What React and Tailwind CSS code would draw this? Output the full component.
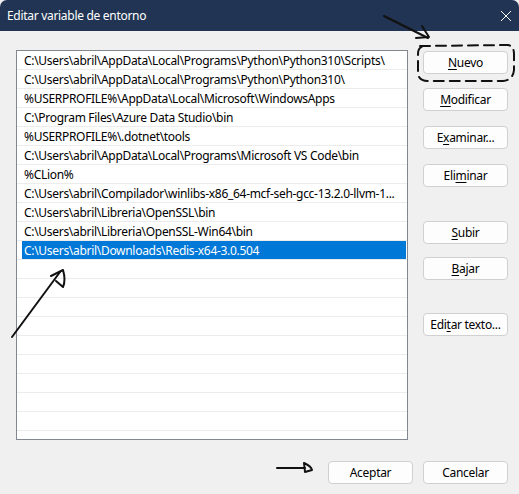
import React from "react"

const entries = [
  "C:\\Users\\abril\\AppData\\Local\\Programs\\Python\\Python310\\Scripts\\",
  "C:\\Users\\abril\\AppData\\Local\\Programs\\Python\\Python310\\",
  "%USERPROFILE%\\AppData\\Local\\Microsoft\\WindowsApps",
  "C:\\Program Files\\Azure Data Studio\\bin",
  "%USERPROFILE%\\.dotnet\\tools",
  "C:\\Users\\abril\\AppData\\Local\\Programs\\Microsoft VS Code\\bin",
  "%CLion%",
  "C:\\Users\\abril\\Compilador\\winlibs-x86_64-mcf-seh-gcc-13.2.0-llvm-1...",
  "C:\\Users\\abril\\Libreria\\OpenSSL\\bin",
  "C:\\Users\\abril\\Libreria\\OpenSSL-Win64\\bin",
  "C:\\Users\\abril\\Downloads\\Redis-x64-3.0.504",
]

const SELECTED = 10
const font = { fontFamily: "'Noto Sans', 'Open Sans', sans-serif" }

// label with one underlined mnemonic letter
const Btn = ({ before = "", key_ = "", after = "", className = "" }) => (
  <button
    className={`h-[23px] w-[85px] rounded-[4px] border border-[#d0d0d0] bg-[#fdfdfd] text-[12px] text-black leading-none ${className}`}
  >
    {before}
    {key_ && <span className="underline underline-offset-2">{key_}</span>}
    {after}
  </button>
)

const Annotations = () => (
  <svg className="pointer-events-none absolute inset-0" width="519" height="494" viewBox="0 0 519 494" fill="none">
    {/* arrow to Nuevo */}
    <path d="M384 16 L428 38" stroke="#111" strokeWidth="2" strokeLinecap="round" />
    <path d="M422 26 L429 37 L416 38" stroke="#111" strokeWidth="2" strokeLinecap="round" strokeLinejoin="round" />
    {/* dashed loop around Nuevo */}
    <path
      d="M420 46 L508 45 Q514 46 514 54 L514 70 Q513 80 503 81 L428 81 Q418 81 418 72 L418 54 Q418 46 426 46"
      stroke="#111"
      strokeWidth="2"
      strokeDasharray="10 6"
      strokeLinecap="round"
    />
    {/* arrow to selected row */}
    <path d="M12 337 L60 272" stroke="#111" strokeWidth="2" strokeLinecap="round" />
    <path d="M51 276 L63 270 Q66 280 63 287 L56 281" stroke="#111" strokeWidth="2" strokeLinecap="round" strokeLinejoin="round" />
    {/* arrow to Aceptar */}
    <path d="M277 468 L305 468" stroke="#111" strokeWidth="2" strokeLinecap="round" />
    <path d="M304 463 Q311 466 312 470 L305 472 Z" stroke="#111" strokeWidth="2" strokeLinejoin="round" />
  </svg>
)

export default function App() {
  const rows = Array.from({ length: 21 }, (_, i) => entries[i] ?? "")

  return (
    <div className="relative h-[494px] w-[519px] overflow-hidden bg-[#f0f0f0] tracking-[-0.3px]" style={font}>
      {/* title bar */}
      <div className="flex h-[31px] items-center justify-between rounded-t-[7px] bg-[#213453] pl-[7px] pr-[6px] text-[12px] text-white">
        <span>Editar variable de entorno</span>
        <svg width="12" height="12" viewBox="0 0 12 12" className="mr-[1px]">
          <path d="M1 1 L11 11 M11 1 L1 11" stroke="#fff" strokeWidth="1" />
        </svg>
      </div>

      <div className="flex">
        {/* list */}
        <div className="ml-[16px] mt-[19px] h-[390px] w-[392px] overflow-hidden border border-[#828790] bg-white">
          {rows.map((text, i) => (
            <div key={i} className="h-[19px] border-b border-[#ececec]">
              <div
                className={`ml-[5px] mr-[1px] h-[18px] whitespace-nowrap pl-[2px] text-[12px] leading-[19px] ${
                  i === SELECTED ? "bg-[#0078d7] text-white" : "text-black"
                }`}
              >
                {text}
              </div>
            </div>
          ))}
        </div>

        {/* side buttons */}
        <div className="ml-[15px] mt-[20px] flex flex-col">
          <Btn key_="N" after="uevo" />
          <Btn className="mt-[14px]" key_="M" after="odificar" />
          <Btn className="mt-[15px]" before="E" key_="x" after="aminar..." />
          <Btn className="mt-[15px]" before="Eli" key_="m" after="inar" />
          <Btn className="mt-[34px]" key_="S" after="ubir" />
          <Btn className="mt-[13px]" key_="B" after="ajar" />
          <Btn className="mt-[33px]" before="Edi" key_="t" after="ar texto..." />
        </div>
      </div>

      {/* footer */}
      <div className="mt-[21px] flex justify-end gap-[10px] pr-[11px]">
        <Btn after="Aceptar" />
        <Btn after="Cancelar" />
      </div>

      <Annotations />
    </div>
  )
}
